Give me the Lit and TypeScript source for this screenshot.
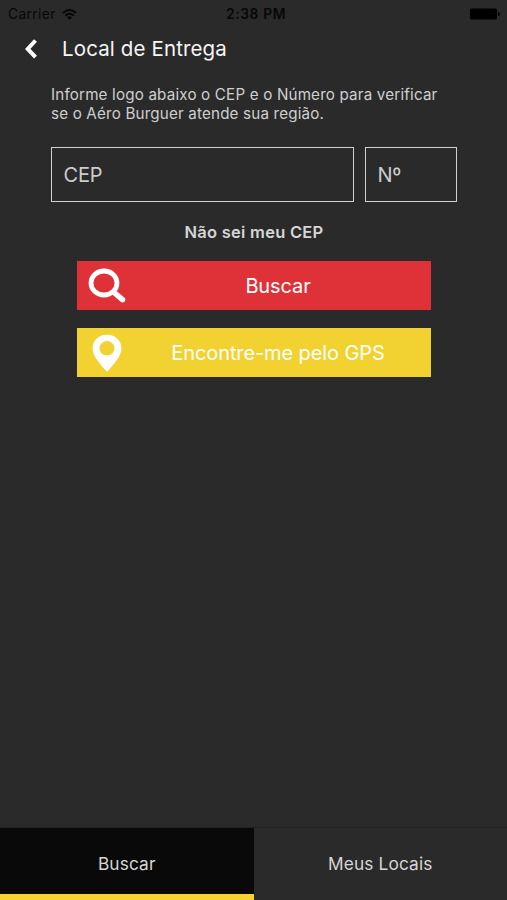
import { LitElement, html, css } from "lit";
import { customElement, state } from "lit/decorators.js";
import { classMap } from "lit/directives/class-map.js";

@customElement("status-bar")
class StatusBar extends LitElement {
  static styles = css`
    :host { display: grid; grid-template-columns: 1fr auto 1fr; align-items: center; height: 28px; color: #070707; font-size: 13.8px; line-height: 28px; }
    .carrier { display: flex; align-items: center; gap: 6px; padding-left: 8px; letter-spacing: 0.35px; }
    .time { font-weight: 600; letter-spacing: 0.6px; padding-left: 5px; }
    .battery { justify-self: end; margin-right: 7px; display: block; }
    svg { display: block; }
  `;
  render() {
    return html`
      <div class="carrier">
        <span>Carrier</span>
        <svg width="15" height="11" viewBox="0 0 15 11" fill="none" stroke="currentColor" stroke-width="1.8">
          <path d="M0.8 4.1 Q7.5 -2 14.2 4.1" />
          <path d="M3.2 6.6 Q7.5 2.8 11.8 6.6" />
          <path d="M7.5 10.8 L5 8.4 Q7.5 6.2 10 8.4 Z" fill="currentColor" stroke="none" />
        </svg>
      </div>
      <span class="time">2:38 PM</span>
      <svg class="battery" width="30" height="12" viewBox="0 0 30 12" fill="#000">
        <rect x="0" y="0.5" width="27" height="11" rx="1.5" />
        <path d="M28 4 Q30 4.2 30 6 Q30 7.8 28 8 Z" />
      </svg>
    `;
  }
}

@customElement("app-root")
class AppRoot extends LitElement {
  @state() private tab = 0;

  static styles = css`
    :host { display: flex; flex-direction: column; height: 900px; background: #2a2a2a; color: #d6d6d6; font-family: Inter, "Liberation Sans", sans-serif; overflow: hidden; }
    svg { display: block; }
    header { display: flex; align-items: center; height: 42px; padding-left: 25px; gap: 25px; color: #f6f6f6; }
    h1 { margin: 0; font-size: 20.5px; font-weight: 400; line-height: 42px; letter-spacing: 0.13px; }
    main { flex: 1; display: flex; flex-direction: column; padding: 15px 50px 0 51px; }
    .intro { margin: 0; font-size: 15.2px; line-height: 19px; letter-spacing: 0.17px; white-space: nowrap; color: #cfcfcf; }
    .fields { display: flex; gap: 11px; margin-top: 24px; }
    .field { box-sizing: border-box; height: 55px; border: 1px solid #d0d0d0; padding-left: 11.5px; font-size: 20px; line-height: 55px; letter-spacing: -0.2px; color: #cdcdcd; }
    .cep { width: 303px; }
    .num { width: 92px; }
    .unknown { margin-top: 20px; line-height: 20px; text-align: center; font-size: 16.5px; font-weight: 600; letter-spacing: 0.26px; }
    .actions { display: flex; flex-direction: column; gap: 18px; margin: 19px 26px 0; }
    .action { display: flex; align-items: center; height: 49px; padding-left: 11px; color: #fff; font-size: 20px; letter-spacing: -0.1px; }
    .action .icon { width: 38px; flex: none; }
    .action .label { flex: 1; text-align: center; line-height: 47px; padding: 2px 1px 0 0; }
    .red { background: #df3238; }
    .yellow { background: #f2d230; }
    .tabs { display: flex; height: 73px; box-sizing: border-box; border-top: 1px solid #222; }
    .tab { flex: 1; box-sizing: border-box; height: 72px; border-bottom: 6px solid transparent; text-align: center; font-size: 17.3px; line-height: 72px; letter-spacing: 0.12px; }
    .tab.active { background: #090909; border-bottom-color: #f6d230; }
  `;

  render() {
    return html`
      <status-bar></status-bar>
      <header>
        <svg width="12" height="20" viewBox="0 0 12 20" fill="none" stroke="#fff" stroke-width="4">
          <path d="M10.5 1.5 L2.7 10 L10.5 18.2" />
        </svg>
        <h1>Local de Entrega</h1>
      </header>
      <main>
        <p class="intro">Informe logo abaixo o CEP e o Número para verificar<br />se o Aéro Burguer atende sua região.</p>
        <div class="fields">
          <div class="field cep">CEP</div>
          <div class="field num">Nº</div>
        </div>
        <div class="unknown">Não sei meu CEP</div>
        <div class="actions">
          <div class="action red">
            <svg class="icon" width="38" height="36" viewBox="0 0 38 36" fill="none" stroke="#fff">
              <ellipse cx="16" cy="15" rx="13" ry="12" stroke-width="4.8" />
              <path d="M25.5 24 L34.5 31.7" stroke-width="5.5" stroke-linecap="round" />
            </svg>
            <span class="label">Buscar</span>
          </div>
          <div class="action yellow">
            <svg class="icon" width="38" height="38" viewBox="0 0 38 38" fill="#fff" fill-rule="evenodd">
              <path d="M19 0.7 C27.5 0.7 33.5 6.7 33.5 14.5 C33.5 21.5 26 30.5 19 37.7 C12 30.5 4.5 21.5 4.5 14.5 C4.5 6.7 10.5 0.7 19 0.7 Z M19 7 A7.5 7.3 0 1 0 19 21.6 A7.5 7.3 0 1 0 19 7 Z" />
            </svg>
            <span class="label">Encontre-me pelo GPS</span>
          </div>
        </div>
      </main>
      <nav class="tabs">
        ${["Buscar", "Meus Locais"].map(
          (name, i) => html`<div class=${classMap({ tab: true, active: this.tab === i })} @click=${() => (this.tab = i)}>${name}</div>`
        )}
      </nav>
    `;
  }
}
